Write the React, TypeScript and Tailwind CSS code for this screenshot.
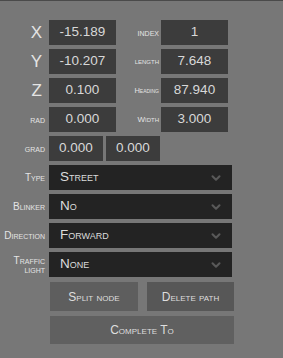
import { ChevronDown } from "lucide-react";

const font = "font-['Liberation_Sans',Arial,sans-serif] [font-variant:small-caps]";

function Label({ text, big, className = "" }: { text: string; big?: boolean; className?: string }) {
  return (
    <div
      className={`flex items-center justify-end text-right leading-[9px] text-[#e4e4e4] ${
        big ? "text-[17px] pr-[3px]" : "text-[10px]"
      } ${className}`}
    >
      {text}
    </div>
  );
}

function Box({ value, w = "w-[67px]" }: { value: string; w?: string }) {
  return (
    <div className={`${w} h-[25px] bg-[#3c3c3c] flex items-center justify-center text-[13.5px] text-[#d8d8d8]`}>
      {value}
    </div>
  );
}

function Select({ label, value }: { label: string; value: string }) {
  return (
    <div className="flex h-[25px] gap-[4px]">
      <Label text={label} className="w-[33px]" />
      <div className="w-[183px] bg-[#232323] flex items-center justify-between pl-[11px] pr-[9px]">
        <span className="text-[13.5px] text-[#dcdcdc]">{value}</span>
        <ChevronDown size={14} strokeWidth={3.5} className="text-[#595959]" />
      </div>
    </div>
  );
}

export default function App() {
  const rows = [
    { l: "X", lv: "-15.189", r: "index", rv: "1", big: true, rs: "!text-[9.5px]" },
    { l: "Y", lv: "-10.207", r: "length", rv: "7.648", big: true, rs: "!text-[9px]" },
    { l: "Z", lv: "0.100", r: "Heading", rv: "87.940", big: true, rs: "!text-[7.5px]" },
    { l: "rad", lv: "0.000", r: "Width", rv: "3.000", big: false, rs: "!text-[8px]" },
  ];

  return (
    <div className={`w-[283px] h-[358px] bg-[#777777] border-t border-[#4a4a4a] ${font}`}>
      <div className="flex flex-col gap-[4px] pt-[19px] pl-[12px]">
        {rows.map((r) => (
          <div key={r.l} className="flex h-[25px]">
            <Label text={r.l} big={r.big} className="w-[33px] mr-[4px]" />
            <Box value={r.lv} />
            <Label text={r.r} className={`w-[45px] pr-[2px] ${r.rs}`} />
            <Box value={r.rv} />
          </div>
        ))}
        <div className="flex h-[25px]">
          <Label text="grad" className="w-[33px] mr-[4px]" />
          <Box value="0.000" w="w-[54px]" />
          <div className="w-[3px]" />
          <Box value="0.000" w="w-[54px]" />
        </div>
        <Select label="Type" value="Street" />
        <Select label="Blinker" value="No" />
        <Select label="Direction" value="Forward" />
        <Select label="Traffic light" value="None" />
        <div className="flex flex-col gap-[5px] pl-[38px] pt-[1px]">
          <div className="flex gap-[9px]">
            <button className="w-[88px] h-[29px] bg-[#5e5e5e] text-[12px] text-[#dedede]">Split node</button>
            <button className="w-[87px] h-[29px] bg-[#575757] text-[12px] text-[#dedede]">Delete path</button>
          </div>
          <button className="w-[184px] h-[28px] bg-[#606060] text-[12px] text-[#dedede]">Complete To</button>
        </div>
      </div>
    </div>
  );
}
